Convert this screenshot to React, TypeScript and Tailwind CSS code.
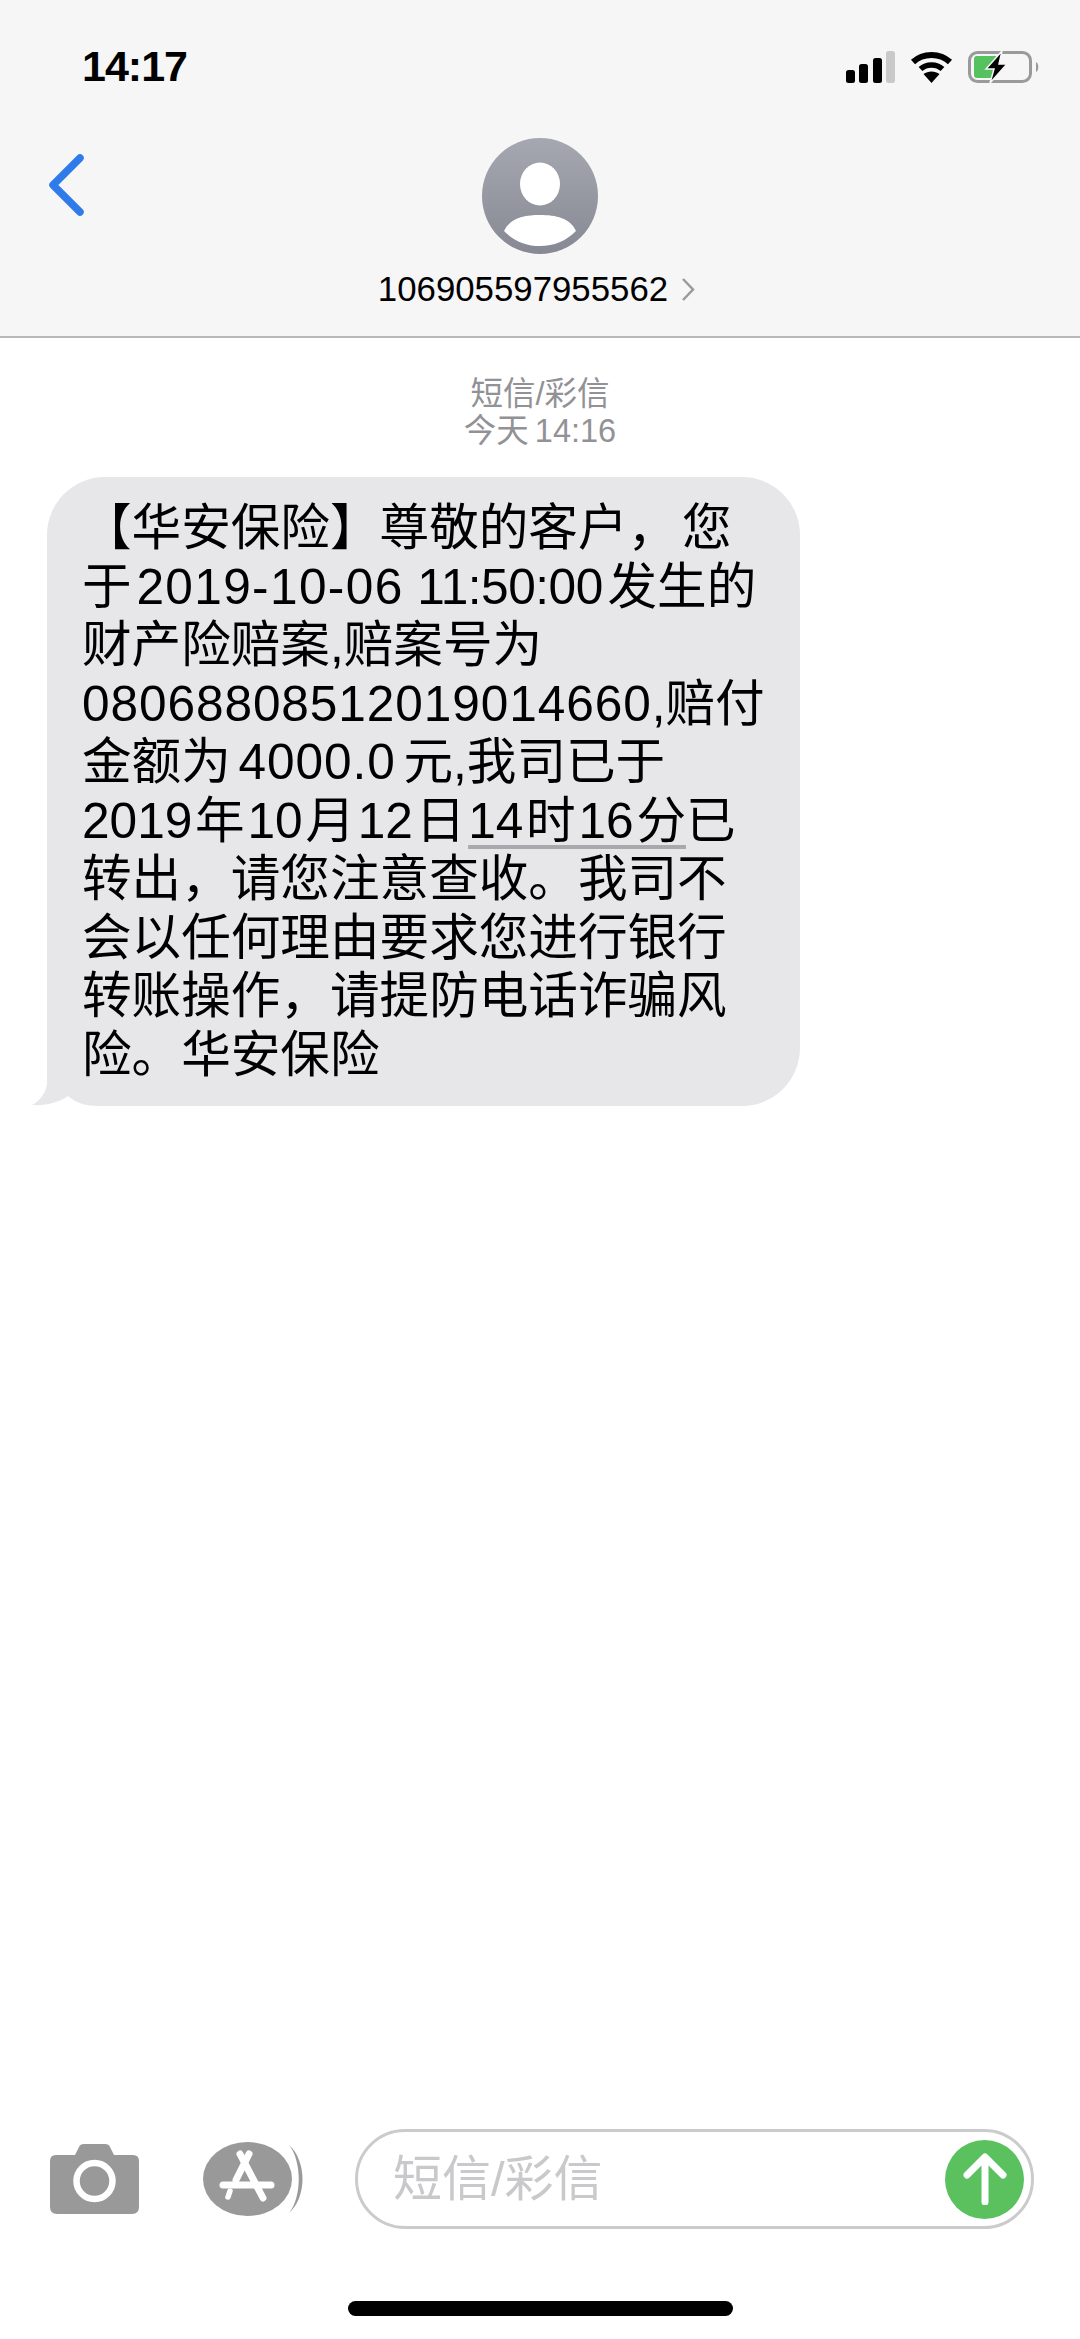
import type { ReactNode } from "react";

const FONT = "font-['Liberation_Sans','Noto_Sans_CJK_SC',sans-serif]";

function StatusIcons() {
  return (
    <div className="flex items-center">
      <svg width="49" height="32" viewBox="0 0 49 32">
        <rect x="0" y="19" width="9" height="13" rx="2.5" fill="#000" />
        <rect x="13" y="13" width="9" height="19" rx="2.5" fill="#000" />
        <rect x="27" y="7" width="9" height="25" rx="2.5" fill="#000" />
        <rect x="40" y="0" width="9" height="32" rx="2.5" fill="#c9c9c9" />
      </svg>
      <svg className="ml-[15px]" width="43" height="32" viewBox="0 0 43 32" fill="none">
        <path d="M3 11 C13 1.5 30 1.5 40 11" stroke="#000" strokeWidth="6" />
        <path d="M10.5 18 C16.5 12.5 26.5 12.5 32.5 18" stroke="#000" strokeWidth="5.5" />
        <path d="M13.5 23 C18 19.5 25 19.5 29.5 23 L21.5 32 Z" fill="#000" />
      </svg>
      <svg className="ml-[15px]" width="72" height="32" viewBox="0 0 72 32" fill="none">
        <rect x="1.5" y="1.5" width="61" height="29" rx="8" stroke="#9a9a9a" strokeWidth="3" />
        <path d="M6 8 a3 3 0 0 1 3-3 H28 V27 H9 a3 3 0 0 1-3-3 Z" fill="#55c25f" />
        <path d="M68 11 C71 12 71 20 68 21 Z" fill="#9a9a9a" />
        <path d="M34 0 L18 18 H26 L22 32 L39 13 H31 Z" fill="#000" stroke="#f6f6f6" strokeWidth="1.5" />
      </svg>
    </div>
  );
}

function Header() {
  return (
    <header className="relative h-[338px] shrink-0 border-b-2 border-[#b8b8b8] bg-[#f6f6f6]">
      <div className="flex items-center justify-between pl-[82px] pr-[40px] pt-[45px]">
        <span className="text-[43px] font-bold leading-[43px] tracking-[-1px] text-black">14:17</span>
        <StatusIcons />
      </div>
      <svg className="absolute left-[47px] top-[153px]" width="38" height="64" viewBox="0 0 38 64" fill="none">
        <path d="M33 5 L6 32 L33 59" stroke="#2f7bea" strokeWidth="7.5" strokeLinecap="round" strokeLinejoin="round" />
      </svg>
      <div className="flex flex-col items-center pt-[50px]">
        <svg width="116" height="116" viewBox="0 0 116 116">
          <defs>
            <linearGradient id="avatarFill" x1="0" y1="0" x2="0" y2="1">
              <stop offset="0" stopColor="#a6a8b1" />
              <stop offset="1" stopColor="#868993" />
            </linearGradient>
            <clipPath id="avatarClip">
              <circle cx="58" cy="58" r="58" />
            </clipPath>
          </defs>
          <circle cx="58" cy="58" r="58" fill="url(#avatarFill)" />
          <ellipse cx="58" cy="46" rx="20" ry="21.5" fill="#fff" />
          <path d="M22 93 C28 80 42 77 58 77 C74 77 88 80 94 93 C84 103 72 108 58 108 C44 108 32 103 22 93 Z" fill="#fff" clipPath="url(#avatarClip)" />
        </svg>
        <div className="mt-[15px] flex items-center gap-[13px] pr-[6px]">
          <span className="text-[34.8px] leading-[40px] text-black">106905597955562</span>
          <svg width="15" height="25" viewBox="0 0 15 25" fill="none">
            <path d="M2 2 L12 12.5 L2 23" stroke="#9a9a9e" strokeWidth="2.5" />
          </svg>
        </div>
      </div>
    </header>
  );
}

function Line({ children, className = "" }: { children: ReactNode; className?: string }) {
  return <p className={`whitespace-nowrap ${className}`}>{children}</p>;
}

function MessageBubble() {
  return (
    <div className="relative ml-[47px] mt-[27px] w-[753px] rounded-[58px] bg-[#e7e7ea] pb-[22px] pl-[35px] pt-[22px] text-[49.6px] leading-[58.5px] text-black [word-spacing:-9px]">
      <svg className="absolute bottom-0 left-[-15px]" width="73" height="56" viewBox="0 0 73 56">
        <path d="M15 0 V33 C15 41 8 51 0 55 C14 56 28 52 36 46 C44 53 54 56 67 56 H73 V0 Z" fill="#e7e7ea" />
      </svg>
      <div className="relative">
        <Line>【华安保险】尊敬的客户， 您</Line>
        <Line>
          于 <span className="[word-spacing:0]"><span className="tracking-[1.35px]">2019-10-06</span> <span className="tracking-[-0.5px]">11:50:00</span></span> 发生的
        </Line>
        <Line>财产险赔案,赔案号为</Line>
        <Line>
          <span className="tracking-[0.9px]">08068808512019014660</span>,赔付
        </Line>
        <Line className="[word-spacing:-6px]">
          金额为 <span className="tracking-[0.9px]">4000.0</span> 元,我司已于
        </Line>
        <Line className="[word-spacing:-11px]">
          2019 年 10 月 12 日{" "}
          <span className="underline decoration-[#a9a9ad] decoration-[3.5px] underline-offset-[7px]">14 时 16 分</span>
          已
        </Line>
        <Line>转出，请您注意查收。我司不</Line>
        <Line>会以任何理由要求您进行银行</Line>
        <Line>转账操作，请提防电话诈骗风</Line>
        <Line>险。华安保险</Line>
      </div>
    </div>
  );
}

function Composer() {
  return (
    <footer className="flex shrink-0 items-center pl-[50px]">
      <svg width="89" height="70" viewBox="0 0 89 70">
        <path d="M6 11 H25 L29 3 Q30 0 34 0 H55 Q59 0 60 3 L64 11 H83 Q89 11 89 17 V63 Q89 70 82 70 H7 Q0 70 0 63 V17 Q0 11 6 11 Z" fill="#999" />
        <circle cx="44.5" cy="37" r="18" fill="none" stroke="#fff" strokeWidth="6.5" />
      </svg>
      <svg className="ml-[64px]" width="101" height="76" viewBox="0 0 101 76" fill="none">
        <path d="M86 4 C104 20 104 56 86 72 C99 56 99 20 86 4 Z" fill="#999" />
        <ellipse cx="44.5" cy="38" rx="44.5" ry="37" fill="#999" />
        <path d="M37 13 L60 57" stroke="#fff" strokeWidth="7" strokeLinecap="round" />
        <path d="M46 13 L33 39" stroke="#fff" strokeWidth="7" strokeLinecap="round" />
        <path d="M27 50 L25 56" stroke="#fff" strokeWidth="5.5" strokeLinecap="round" />
        <path d="M20 44 H68" stroke="#fff" strokeWidth="7" strokeLinecap="round" />
      </svg>
      <div className="ml-[51px] flex h-[100px] w-[679px] items-center justify-between rounded-[50px] border-[3px] border-[#cbcbce] pl-[35px] pr-[7px]">
        <span className="text-[49px] leading-none text-[#c9c9cc]">短信/彩信</span>
        <span className="flex size-[79px] items-center justify-center rounded-full bg-[#5ac15e]">
          <svg width="44" height="52" viewBox="0 0 44 52" fill="none">
            <path d="M22 49 V5 M4 22 L22 4 L40 22" stroke="#fff" strokeWidth="7" strokeLinecap="round" strokeLinejoin="round" />
          </svg>
        </span>
      </div>
    </footer>
  );
}

export default function App() {
  return (
    <div className={`flex h-[2339px] w-[1080px] flex-col overflow-hidden bg-white ${FONT}`}>
      <Header />
      <main className="flex-1">
        <div className="pt-[38px] text-center text-[32.5px] leading-[37px] text-[#929296]">
          <p>短信/彩信</p>
          <p className="[word-spacing:-3px]">今天 14:16</p>
        </div>
        <MessageBubble />
      </main>
      <Composer />
      <div className="flex h-[110px] shrink-0 justify-center pt-[72px]">
        <div className="h-[15px] w-[385px] rounded-full bg-black" />
      </div>
    </div>
  );
}
